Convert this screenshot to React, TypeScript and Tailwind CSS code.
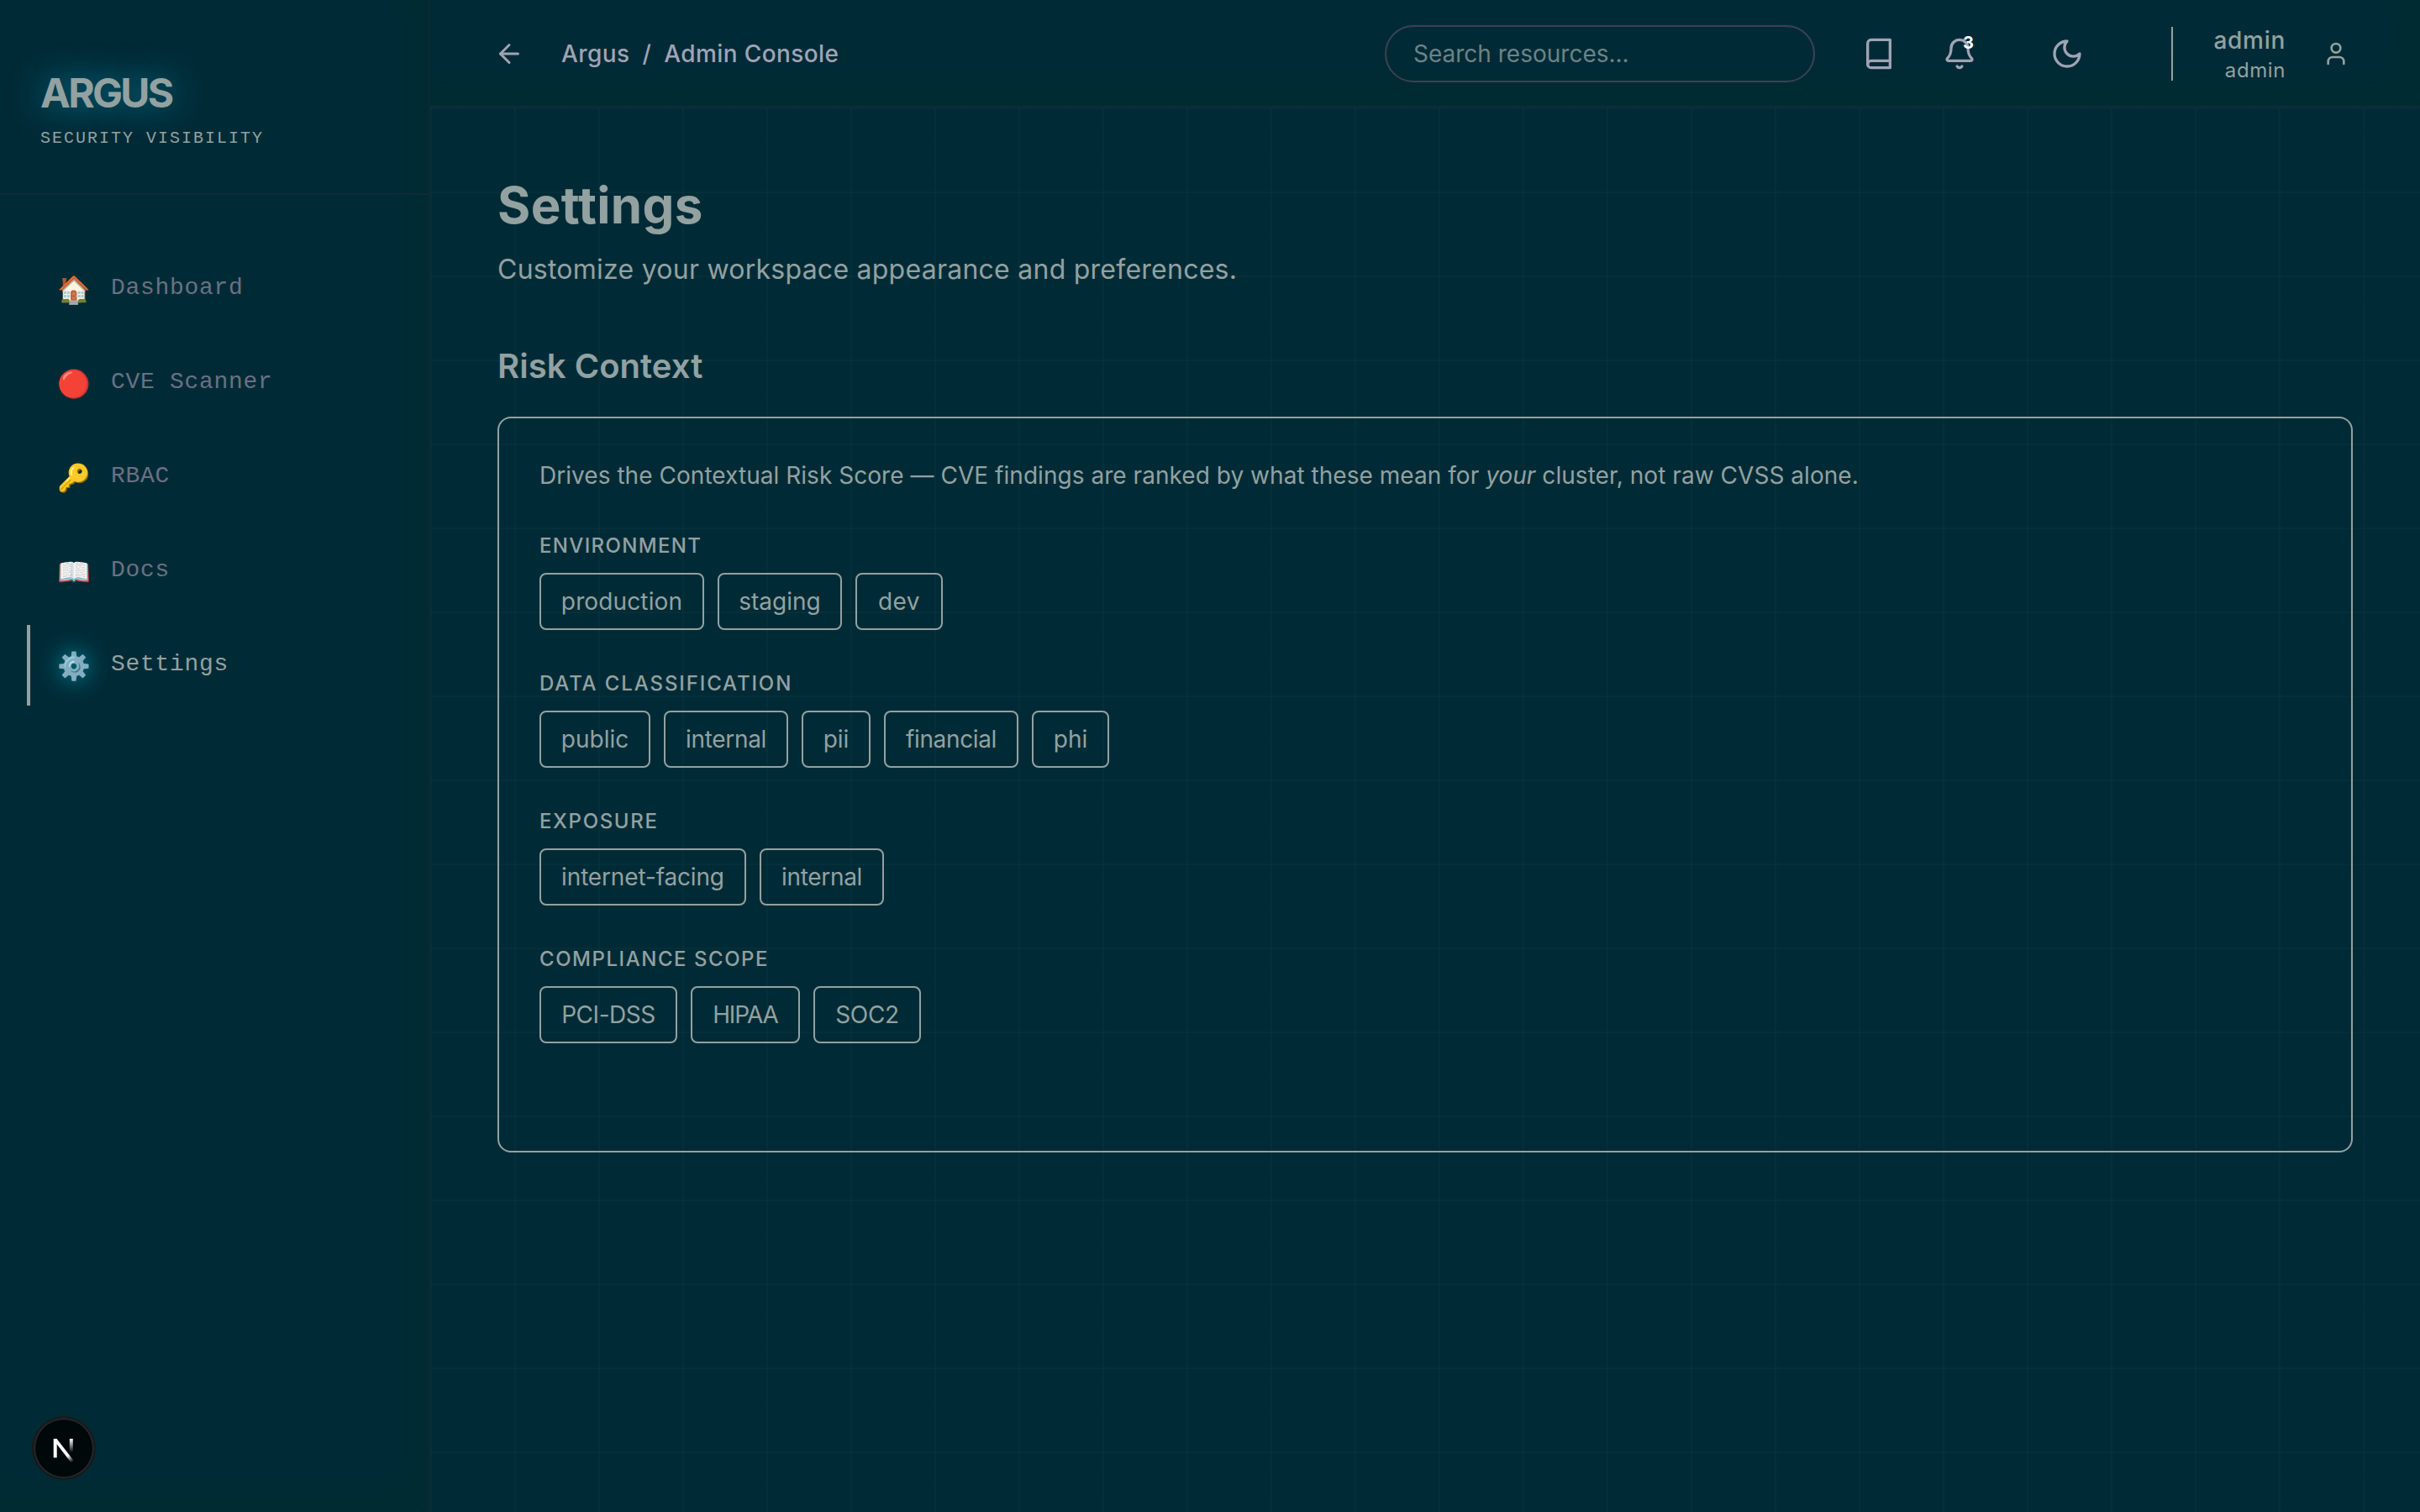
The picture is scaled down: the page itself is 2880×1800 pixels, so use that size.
import React from "react";
import { ArrowLeft } from "lucide-react";

const navItems = [
  { icon: "🏠", label: "Dashboard" },
  { icon: "🔴", label: "CVE Scanner" },
  { icon: "🔑", label: "RBAC" },
  { icon: "📖", label: "Docs" },
  { icon: "⚙️", label: "Settings", active: true },
];

const groups = [
  {
    label: "Environment",
    labelClass: "tracking-[1.35px]",
    options: [
      { name: "production", className: "w-[196px] tracking-[0.13px]" },
      { name: "staging", className: "w-[148px]" },
      { name: "dev", className: "w-[104px] tracking-[0.5px]" },
    ],
  },
  {
    label: "Data classification",
    labelClass: "tracking-[1.88px]",
    options: [
      { name: "public", className: "w-[132px]" },
      { name: "internal", className: "w-[148px] tracking-[-0.3px]" },
      { name: "pii", className: "w-[82px]" },
      { name: "financial", className: "w-[160px] tracking-[-0.35px]" },
      { name: "phi", className: "w-[92px]" },
    ],
  },
  {
    label: "Exposure",
    labelClass: "tracking-[1.65px]",
    options: [
      { name: "internet-facing", className: "w-[246px] tracking-[-0.15px]" },
      { name: "internal", className: "w-[148px] tracking-[-0.3px]" },
    ],
  },
  {
    label: "Compliance scope",
    labelClass: "tracking-[1.54px]",
    options: [
      { name: "PCI-DSS", className: "w-[164px] tracking-[-0.45px]" },
      { name: "HIPAA", className: "w-[130px] tracking-[-1.1px]" },
      { name: "SOC2", className: "w-[128px] tracking-[-0.3px]" },
    ],
  },
];

type Group = (typeof groups)[number];

function Icon({
  className,
  children,
}: {
  className: string;
  children: React.ReactNode;
}) {
  return (
    <svg
      viewBox="0 0 24 24"
      fill="none"
      stroke="currentColor"
      strokeWidth="2"
      strokeLinecap="round"
      strokeLinejoin="round"
      className={className}
    >
      {children}
    </svg>
  );
}

function Sidebar() {
  return (
    <aside className="w-[512px] shrink-0 border-r-2 border-[#0c2935] shadow-[inset_-20px_-20px_40px_rgba(0,48,40,0.25)]">
      <div className="h-[232px] border-b-2 border-[#122a38] px-12 pt-[79px]">
        <div className="text-[48px] leading-[64px] font-bold tracking-[-2.7px] [text-shadow:0_0_40px_rgba(0,212,255,0.5)]">
          ARGUS
        </div>
        <div className="mt-[7px] font-['Liberation_Mono',monospace] text-[20px] leading-[30px] tracking-[0.1em]">
          SECURITY VISIBILITY
        </div>
      </div>
      <nav className="flex flex-col gap-4 px-8 pt-16">
        {navItems.map((item) => (
          <a
            key={item.label}
            className={
              item.active
                ? "flex h-24 items-center gap-6 border-l-4 border-[#93a1a1] px-8 text-[#93a1a1]"
                : "flex h-24 items-center gap-6 border-l-4 border-transparent px-8 text-[#6b7083]"
            }
          >
            <span
              className={
                item.active
                  ? "w-10 pt-[2px] text-center text-[32px] leading-10 drop-shadow-[0_0_14px_rgba(0,212,255,0.65)]"
                  : "w-10 pt-[2px] text-center text-[32px] leading-10"
              }
            >
              {item.icon}
            </span>
            <span className="pb-[3px] font-['Liberation_Mono',monospace] text-[28px] leading-10 tracking-[0.025em]">
              {item.label}
            </span>
          </a>
        ))}
      </nav>
    </aside>
  );
}

function Header() {
  return (
    <header className="flex h-32 shrink-0 items-center border-b-2 border-[#122a38] pt-[2px] pr-[84px] pl-[76px] text-[#a0a3b5] shadow-[inset_-20px_-20px_40px_rgba(0,48,40,0.25)]">
      <ArrowLeft className="size-9" />
      <div className="ml-11 flex gap-[15px] text-[28px] leading-10 font-medium tracking-[0.4px]">
        <span>Argus</span>
        <span>/</span>
        <span>Admin Console</span>
      </div>
      <input
        placeholder="Search resources..."
        className="ml-auto h-[68px] w-[512px] rounded-full border-2 border-[#3b4255] px-8 text-[28px] placeholder:text-[#6b8388]"
      />
      <Icon className="ml-14 size-10">
        <path d="M4 19.5A2.5 2.5 0 0 1 6.5 17H20" />
        <path d="M6.5 2H20v20H6.5A2.5 2.5 0 0 1 4 19.5v-15A2.5 2.5 0 0 1 6.5 2z" />
      </Icon>
      <div className="relative ml-14">
        <Icon className="size-10">
          <path d="M10.268 21a2 2 0 0 0 3.464 0" />
          <path d="M3.262 15.326A1 1 0 0 0 4 17h16a1 1 0 0 0 .74-1.673C19.41 13.956 18 12.499 18 8A6 6 0 0 0 6 8c0 4.499-1.411 5.956-2.738 7.326" />
        </Icon>
        <span className="absolute top-[-3px] right-[3px] text-[20px] leading-5 font-bold text-white">
          3
        </span>
      </div>
      <Icon className="ml-[88px] size-10">
        <path d="M12 3a6 6 0 0 0 9 9 9 9 0 1 1-9-9Z" />
      </Icon>
      <div className="ml-[104px] flex h-16 items-center border-l-2 border-[#93a1a1] text-[#93a1a1]">
        <div className="w-[134px] pt-[2px] text-right">
          <div className="text-[28px] leading-[36px] font-medium tracking-[0.025em]">
            admin
          </div>
          <div className="mt-[2px] text-[24px] leading-[32px] tracking-[0.6px]">
            admin
          </div>
        </div>
        <Icon className="ml-11 size-8">
          <path d="M19 21v-2a4 4 0 0 0-4-4H9a4 4 0 0 0-4 4v2" />
          <circle cx="12" cy="7" r="4" />
        </Icon>
      </div>
    </header>
  );
}

function OptionGroup({ label, labelClass, options }: Group) {
  return (
    <div className="mb-12">
      <div className={`mb-4 text-[24px] leading-8 font-medium uppercase ${labelClass}`}>
        {label}
      </div>
      <div className="flex gap-4">
        {options.map((option) => (
          <button
            key={option.name}
            className={`h-[68px] rounded-lg border-2 border-[#93a1a1] text-[28px] leading-10 whitespace-nowrap ${option.className}`}
          >
            {option.name}
          </button>
        ))}
      </div>
    </div>
  );
}

function DevBadge() {
  return (
    <div className="absolute bottom-[38px] left-[38px] flex size-[76px] items-center justify-center rounded-full border-2 border-[#171b1d] bg-[#01080a] shadow-[inset_0_0_0_2px_#24292b]">
      <svg viewBox="0 0 40 40" fill="none" className="size-10">
        <defs>
          <linearGradient id="diag" x1="22" y1="24" x2="31" y2="36" gradientUnits="userSpaceOnUse">
            <stop stopColor="#fff" />
            <stop offset="0.35" stopColor="#fff" />
            <stop offset="1" stopColor="#fff" stopOpacity="0" />
          </linearGradient>
          <linearGradient id="stem" x1="0" y1="9" x2="0" y2="25" gradientUnits="userSpaceOnUse">
            <stop stopColor="#fff" />
            <stop offset="1" stopColor="#fff" stopOpacity="0" />
          </linearGradient>
        </defs>
        <path d="M9.7 8.8v22.5" stroke="#fff" strokeWidth="4" />
        <path d="M10 10l20.5 26.5" stroke="url(#diag)" strokeWidth="3.8" />
        <path d="M28.8 8.8v16" stroke="url(#stem)" strokeWidth="4" />
      </svg>
    </div>
  );
}

export default function App() {
  return (
    <div className="relative flex h-[1800px] w-[2880px] overflow-hidden bg-[#002b36] font-['Inter',sans-serif] text-[#93a1a1]">
      <Sidebar />
      <div className="flex min-w-0 flex-1 flex-col">
        <Header />
        <main className="flex-1 bg-[linear-gradient(rgba(147,161,161,0.03)_2px,transparent_2px),linear-gradient(90deg,rgba(147,161,161,0.03)_2px,transparent_2px)] bg-[size:100px_100px] p-20">
          <h1 className="text-[60px] leading-[72px] font-bold tracking-[0.35px]">
            Settings
          </h1>
          <p className="mt-[17px] text-[32px] leading-[48px] tracking-[0.25px]">
            Customize your workspace appearance and preferences.
          </p>
          <h2 className="mt-[63px] text-[40px] leading-[56px] font-semibold tracking-[0.05px]">
            Risk Context
          </h2>
          <section className="mt-8 h-[876px] rounded-2xl border-2 border-[#93a1a1] p-12">
            <p className="mb-12 text-[28px] leading-10 tracking-[0.04px]">
              Drives the Contextual Risk Score — CVE findings are ranked by what
              these mean for <em>your</em> cluster, not raw CVSS alone.
            </p>
            {groups.map((group) => (
              <OptionGroup key={group.label} {...group} />
            ))}
          </section>
        </main>
      </div>
      <DevBadge />
    </div>
  );
}
